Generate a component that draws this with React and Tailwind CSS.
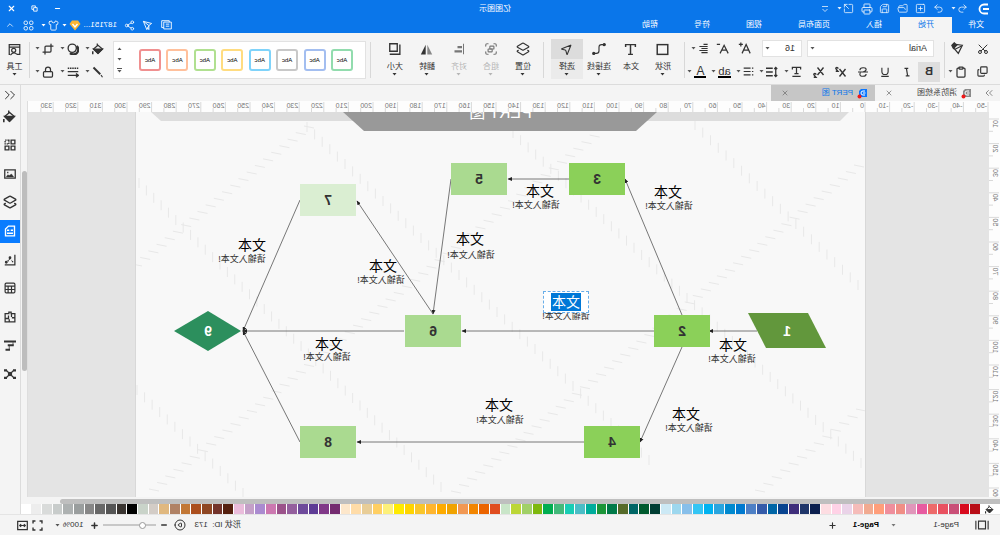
import React from "react";
import {
  ChevronsLeft,
  ChevronsRight,
  ChevronUp,
  CirclePlay,
  Clipboard,
  Copy,
  Crop,
  FolderOpen,
  Group,
  Layers2,
  Lock,
  MousePointer2,
  Plus,
  Minus,
  Printer,
  Redo2,
  Save,
  Scissors,
  Share2,
  Shirt,
  SquareArrowOutUpRight,
  SquarePlus,
  Undo2,
  X,
} from "lucide-react";

const colors = [
  "#b80d16", "#d80a1d", "#c94f77", "#e95160", "#ed6a6a", "#e75ba0", "#e096ba", "#f08e85", "#ef8e9c", "#ff9e7a",
  "#f1aa90", "#f5bcb9", "#ead3e8", "#ffd2e6", "#fddde2", "#0b1f4e", "#1f3569", "#3e2d7a", "#084490", "#0066a6",
  "#355ba9", "#4d7fc5", "#0079cf", "#0089cf", "#29a5df", "#00b2f0", "#34c5f4", "#87bfea", "#9dd7ee", "#cce9f5",
  "#003d33", "#005a2e", "#006666", "#566b2a", "#007a49", "#1c9639", "#00ad9c", "#4bbdc6", "#18cdb4", "#43b97a",
  "#00ad50", "#7eb80d", "#a1d067", "#bcd636", "#c9e5c8", "#e04c1f", "#eb6400", "#f28500", "#f19853", "#f0a300",
  "#feab00", "#ffb52e", "#f9c62b", "#ffd400", "#ffea00", "#fdf07a", "#ffcf63", "#e8cd97", "#ffdca8", "#fde7cb",
  "#742b70", "#803888", "#5e3c95", "#6e4a9b", "#945f9d", "#9b528a", "#cc78b0", "#aa8bd0", "#c4a0c8", "#eabcdb",
  "#55200f", "#73332a", "#8e4623", "#ab4e1d", "#c27735", "#b08265", "#e0b87f", "#d3ccc6", "#c9d3c9", "#000000",
  "#3a3531", "#555555", "#686868", "#878787", "#9a9e9e", "#adb1b1", "#c8cccb", "#d9dbda", "#ededed", "#ffffff",
];

const chips = [
  "border-[#92dcae]",
  "border-[#a3bef0]",
  "border-[#c8c8c8]",
  "border-[#7fd3fa]",
  "border-[#ffdc80]",
  "border-[#b0e090]",
  "border-[#ffc09c]",
  "border-[#f09090]",
];

// node boxes on the page, x/y is the top left corner
const nodes = [
  { n: 2, x: 155, y: 203, cls: "bg-[#8bd059]" },
  { n: 3, x: 240, y: 51, cls: "bg-[#8bd059]" },
  { n: 4, x: 225, y: 314, cls: "bg-[#8bd059]" },
  { n: 5, x: 358, y: 51, cls: "bg-[#aada90]" },
  { n: 6, x: 404, y: 203, cls: "bg-[#aada90]" },
  { n: 7, x: 509, y: 72, cls: "bg-[#daeed2]" },
  { n: 8, x: 509, y: 314, cls: "bg-[#aada90]" },
];

// [x1, y1, x2, y2], the arrow head is at the second point
const links = [
  [108, 219, 156, 219],
  [183, 203, 240, 67],
  [296, 67, 357, 67],
  [414, 67, 432, 202],
  [432, 202, 508, 89],
  [211, 219, 403, 219],
  [183, 235, 225, 330],
  [280, 330, 508, 330],
  [461, 219, 622, 219],
  [565, 88, 622, 219],
  [565, 330, 622, 219],
];

// centres of the heading and of the hint under it
const labels = [
  { head: [197, 80], hint: [196, 94] },
  { head: [325, 79], hint: [329, 93] },
  { head: [395, 127], hint: [394, 143] },
  { head: [482, 154], hint: [484, 168] },
  { head: [613, 133], hint: [623, 147] },
  { head: [536, 232], hint: [538, 245] },
  { head: [132, 233], hint: [133, 247] },
  { head: [366, 293], hint: [365, 308] },
  { head: [179, 302], hint: [176, 316] },
];

const between = (x1, y1, x2, y2, step) => {
  const count = Math.floor(Math.hypot(x2 - x1, y2 - y1) / step);
  return Array.from({ length: count + 1 }, (_, i) => [
    x1 + ((x2 - x1) * i) / count,
    y1 + ((y2 - y1) * i) / count,
  ]);
};

const upright = [
  [170, 13, 7, 173],
  [352, 21, 4, 351],
  [558, 15, 216, 348],
  [726, 71, 424, 375],
  [728, 278, 622, 381],
].flatMap((r) => between(...r, 10.4));

const slanted = [
  [6, 54, 409, 380],
  [254, 11, 711, 378],
  [556, 15, 728, 153],
  [4, 298, 105, 379],
].flatMap((r) => between(...r, 10.3));

const Icon = ({ size = 12, box = 16, w = 1.3, children }) => (
  <svg width={size} height={size} viewBox={`0 0 ${box} ${box}`} fill="none" stroke="currentColor" strokeWidth={w}>
    {children}
  </svg>
);

const Bucket = ({ size = 12 }) => (
  <Icon size={size} w={1.6}>
    <path d="M8 3l6 5-6 6-6-6zM9 4V0.500" />
    <path d="M2 8h12l-6 6z" fill="currentColor" />
    <path d="M15 11v4" strokeWidth="2" />
  </Icon>
);

const Caret = ({ className = "text-[#555]" }) => (
  <svg width="5" height="3" viewBox="0 0 5 3" className={className} fill="currentColor">
    <path d="M0.5 0h4L2.5 2.6z" />
  </svg>
);

const Divider = () => <div className="mt-[9px] h-9 w-px bg-[#d8d8d8]" />;

const Cell = ({ label, wide, className = "", children }) => (
  <button
    aria-label={label}
    className={`flex h-5 items-center justify-center gap-[2px] ${wide ? "w-6" : "w-[22px]"} ${className}`}
  >
    {children}
    {wide && <Caret />}
  </button>
);

const Tool = ({ label, caret = true, active, dim, children }) => (
  <button className={`flex h-10 w-8 flex-col items-center ${active ? "bg-[#ebebeb]" : ""} ${dim ? "text-[#b5b5b5]" : "text-[#333]"}`}>
    <span className={`flex h-5 w-full shrink-0 items-center justify-center ${active ? "bg-[#dcdcdc]" : ""}`}>{children}</span>
    <span className="mt-[3px] whitespace-nowrap text-[8px] leading-[10px]">{label}</span>
    {caret && (
      <span className="mt-px flex">
        <Caret className="text-current" />
      </span>
    )}
  </button>
);

const TitleBar = () => (
  <div className="flex h-[17px] items-center text-white">
    <div className="flex flex-1 items-center pl-[10px]">
      <svg width="12" height="12" viewBox="0 0 12 12" fill="none" stroke="white" strokeWidth="1.8">
        <path d="M2 1.5h4a4.5 4.5 0 0 1 0 9H2M1 6h6" />
      </svg>
      <div className="ml-[6px] flex opacity-90">
        <button aria-label="撤销" className="flex w-6 items-center justify-center gap-px">
          <Undo2 size={11} strokeWidth={1.8} />
          <Caret className="text-white" />
        </button>
        <button aria-label="重做" className="flex w-[18px] justify-center"><Redo2 size={11} strokeWidth={1.8} /></button>
        <button aria-label="新建" className="flex w-[18px] justify-center"><SquarePlus size={11} strokeWidth={1.8} /></button>
        <button aria-label="打开" className="flex w-[18px] justify-center"><FolderOpen size={11} strokeWidth={1.8} /></button>
        <button aria-label="保存" className="flex w-[18px] justify-center"><Save size={11} strokeWidth={1.8} /></button>
        <button aria-label="打印" className="flex w-[18px] justify-center"><Printer size={12} strokeWidth={1.8} /></button>
        <button aria-label="导出" className="flex w-6 items-center justify-center gap-px">
          <SquareArrowOutUpRight size={11} strokeWidth={1.8} />
          <Caret className="text-white" />
        </button>
        <button aria-label="更多" className="flex w-[18px] items-center justify-center">
          <Icon size={8} w={1.6}><path d="M2 3h12M3 8l5 5 5-5" /></Icon>
        </button>
      </div>
    </div>
    <h1 className="text-[8px]">亿图图示</h1>
    <div className="flex flex-1 justify-end">
      <button aria-label="最小化" className="flex w-[23px] items-center justify-center"><Minus size={7} strokeWidth={4} /></button>
      <button aria-label="还原" className="flex w-[23px] items-center justify-center">
        <Icon size={7} w={2}><path d="M2 6h8v8H2zM6 6V2h8v8h-4" /></Icon>
      </button>
      <button aria-label="关闭" className="flex w-[23px] items-center justify-center"><X size={9} strokeWidth={3} /></button>
    </div>
  </div>
);

const MenuBar = () => (
  <div className="flex h-4 items-stretch text-[8px] text-white">
    <button className="w-12">文件</button>
    <button className="bg-[#f4f4f4] px-[18px] text-[#0a76ea]">开始</button>
    {["插入", "页面布局", "视图", "符号", "帮助"].map((m) => (
      <button key={m} className="px-[18px]">{m}</button>
    ))}
    <div className="ml-auto flex items-center">
      <button aria-label="消息" className="flex w-5 justify-center">
        <Icon size={11}><path d="M1 3h11v10H1zM4 3V1h11v10h-3M4 6h5M4 9h5" /></Icon>
      </button>
      <button aria-label="发送" className="flex w-[18px] justify-center">
        <Icon size={11}><path d="M14 2L2 5l4 3zM14 2L9 14 6 8M6 8v6l2-3" /></Icon>
      </button>
      <button aria-label="分享" className="flex w-[18px] justify-center"><Share2 size={11} strokeWidth={1.8} className="-scale-x-100" /></button>
      <button className="flex w-[59px] items-center justify-between pl-1">
        187151...
        <svg width="12" height="11" viewBox="0 0 12 11">
          <path d="M3 0.5h6L11.5 4 6 10.5 0.5 4z" fill="#fbb534" />
          <path d="M3.5 4L6 7l2.5-3" stroke="white" strokeWidth="1.4" fill="none" />
        </svg>
        <Caret className="text-white" />
      </button>
      <button aria-label="主题" className="flex w-6 items-center justify-center gap-[2px]">
        <Shirt size={11} strokeWidth={1.8} />
        <Caret className="text-white" />
      </button>
      <button aria-label="应用" className="flex w-[18px] justify-center">
        <Icon size={11}>
          <rect x="1.5" y="1.5" width="5" height="5" rx="2" />
          <rect x="9.5" y="1.5" width="5" height="5" rx="2" />
          <rect x="1.5" y="9.5" width="5" height="5" rx="2" />
          <rect x="9.5" y="9.5" width="5" height="5" rx="2" />
        </Icon>
      </button>
      <button aria-label="收起" className="flex w-5 justify-center"><ChevronUp size={10} strokeWidth={1.8} /></button>
    </div>
  </div>
);

const FontGroup = () => (
  <div className="flex flex-col pl-1 pt-1 text-[#333]">
    <div className="flex h-[23px] items-center pl-[6px]">
      <div className="relative">
        <select aria-label="字体" className="block h-[17px] w-[127px] appearance-none border border-[#e2e2e2] bg-white px-[6px] text-[9px] leading-[15px]">
          <option>Arial</option>
        </select>
        <Caret className="absolute right-[3px] top-[7px] text-[#555]" />
      </div>
      <div className="relative ml-[5px]">
        <select aria-label="字号" className="block h-[17px] w-10 appearance-none border border-[#e2e2e2] bg-white px-[6px] text-[9px] leading-[15px]">
          <option>16</option>
        </select>
        <Caret className="absolute right-[3px] top-[7px] text-[#555]" />
      </div>
      <div className="ml-[6px] flex">
        <Cell label="增大字号"><Icon size={13} w={1.5}><path d="M1 14L6 3l5 11M3 10h6M10 3h5M12.5 0.5v5" /></Icon></Cell>
        <Cell label="减小字号"><Icon size={13} w={1.5}><path d="M1 14L6 4l5 10M3 10h6M11 3h4" /></Icon></Cell>
        <Cell label="对齐" wide><Icon size={11} w={1.6}><path d="M2 2h6M2 5h12M2 8h9M2 11h12M2 14h9" /></Icon></Cell>
      </div>
    </div>
    <div className="flex h-[23px] items-center">
      <Cell label="粗体" className="bg-[#dedede] text-[11px] font-bold">B</Cell>
      <Cell label="斜体"><Icon size={10} w={2}><path d="M6 2h6M4 14h6M9 2L7 14" /></Icon></Cell>
      <Cell label="下划线"><Icon size={10} w={1.8}><path d="M3 1v6a5 5 0 0 0 10 0V1M2 15h12" /></Icon></Cell>
      <Cell label="删除线"><Icon size={10} w={1.8}><path d="M13 5c0-5-10-5-10-1 0 2 2 3 5 4M3 11c0 5 10 5 10 1 0-1 0-2-1-3M0 8h16" /></Icon></Cell>
      <Cell label="上标"><Icon size={12} w={1.8}><path d="M2 4l8 10M10 4L2 14M12 3.5c0-2 3-2 3 0L12 7h3" /></Icon></Cell>
      <Cell label="下标"><Icon size={12} w={1.8}><path d="M2 2l8 10M10 2L2 12M12 11.500c0-2 3-2 3 0L12 15h3" /></Icon></Cell>
      <div className="ml-[3px] flex">
        <Cell label="文字方向" wide><Icon size={11} w={1.8}><path d="M2 5V2h12v3M8 2v9M5 11h6M2 15h12" /></Icon></Cell>
        <Cell label="行距" wide><Icon size={12} w={1.7}><path d="M3 2v12M1 4l2-2 2 2M1 12l2 2 2-2M7 3h9M7 8h9M7 13h9" /></Icon></Cell>
        <Cell label="列表" wide><Icon size={11} w={1.8}><path d="M1 3h2M1 8h2M1 13h2M5 3h10M5 8h10M5 13h10" /></Icon></Cell>
        <Cell label="突出显示" wide><span className="border-b-2 border-black text-[11px] leading-[10px]">ab</span></Cell>
        <Cell label="字体颜色" wide><span className="w-3 border-b-2 border-black text-[12px] leading-[10px]">A</span></Cell>
      </div>
    </div>
  </div>
);

const Ribbon = () => (
  <div className="flex h-[52px] items-start border-b border-[#dcdcdc] bg-[#f4f4f4] text-[#333]">
    <div className="flex flex-col pl-1 pt-1">
      <div className="flex h-[23px] items-center">
        <button aria-label="剪切" className="flex w-[26px] justify-center"><Scissors size={12} className="-rotate-90" /></button>
        <button aria-label="格式刷" className="flex w-[25px] justify-center">
          <Icon size={13} w={1.5}>
            <path d="M2 4l8-1 3 4-6 7z" />
            <path d="M9 4l3-3 3 3-2 4z" fill="currentColor" />
            <path d="M3 5l8 4" />
          </Icon>
        </button>
      </div>
      <div className="flex h-[23px] items-center">
        <button aria-label="复制" className="flex w-[26px] justify-center"><Copy size={11} strokeWidth={2.5} className="-scale-100" /></button>
        <button aria-label="粘贴" className="flex w-[25px] items-center justify-center gap-[2px]"><Clipboard size={12} strokeWidth={2.5} /><Caret /></button>
      </div>
    </div>
    <Divider />
    <FontGroup />
    <Divider />
    <div className="flex pl-[5px] pr-[7px] pt-[6px]">
      <Tool label="形状"><Icon size={13} w={1.8}><rect x="1.500" y="2" width="13" height="12" /></Icon></Tool>
      <Tool label="文本" caret={false}><Icon size={13} w={1.8}><path d="M2 5V2h12v3M8 2v12M5 14h6" /></Icon></Tool>
      <Tool label="连接线">
        <Icon size={14}>
          <path d="M3 3h2q3 0 3 3v4q0 3 3 3h2" />
          <circle cx="2" cy="3" r="1.200" fill="currentColor" />
          <circle cx="14" cy="13" r="1.200" fill="currentColor" />
        </Icon>
      </Tool>
      <Tool label="选择" active><MousePointer2 size={13} /></Tool>
    </div>
    <Divider />
    <div className="flex pl-1 pr-2 pt-[6px]">
      <Tool label="位置"><Layers2 size={14} /></Tool>
      <Tool label="组合" dim><Group size={14} className="text-[#777]" /></Tool>
      <Tool label="对齐" dim>
        <Icon size={12} w={1.4}><path d="M2 1v14" stroke="#777" /><path d="M4 5.500h6M4 11h10" stroke="#777" strokeWidth="3" /></Icon>
      </Tool>
      <Tool label="翻转">
        <Icon size={13} w={0}><path d="M7 2v12H1z" fill="#888" /><path d="M9 2v12h6z" fill="#333" /></Icon>
      </Tool>
      <Tool label="大小"><Icon size={12} w={1.8}><path d="M5 1h10v10H5zM1.500 2v13H15" /></Icon></Tool>
    </div>
    <Divider />
    <div className="ml-1 mt-2 flex h-[38px] flex-1 border border-[#e2e2e2] bg-white">
      <div className="flex flex-1 items-center justify-between pl-3">
        {chips.map((c) => (
          <button key={c} className={`size-[22px] rounded-[3px] border-2 text-[6px] leading-none text-black ${c}`}>Abc</button>
        ))}
      </div>
      <div className="ml-[13px] flex w-3 flex-col items-center justify-between py-[5px]">
        <button aria-label="上一行"><Caret className="rotate-180 text-[#555]" /></button>
        <button aria-label="下一行"><Caret /></button>
        <button aria-label="全部样式" className="border-t border-[#555] pt-px"><Caret /></button>
      </div>
    </div>
    <div className="flex flex-col pl-[6px] pr-[3px] pt-1">
      <div className="flex h-[23px] items-center gap-px">
        <Cell label="填充" wide><Bucket /></Cell>
        <Cell label="阴影" wide>
          <Icon size={12} w={1.8}><circle cx="9" cy="7" r="5.500" /><path d="M3 4a6.500 6.500 0 0 0 9 9.500" strokeWidth="3" /></Icon>
        </Cell>
        <Cell label="裁剪" wide><Crop size={12} strokeWidth={2.5} /></Cell>
      </div>
      <div className="flex h-[23px] items-center gap-px">
        <Cell label="线条" wide><Icon size={12} w={2.6}><path d="M14 2L5 11" /><path d="M4 12l-2 3" strokeWidth="1.500" /></Icon></Cell>
        <Cell label="线型" wide><Icon size={12} w={1.8}><path d="M1 3h14" strokeDasharray="2 1" /><path d="M1 7.500h14M1 12.500h14M4 10l-3 2.500L4 15" /></Icon></Cell>
        <Cell label="锁定" wide><Lock size={12} strokeWidth={2.5} /></Cell>
      </div>
    </div>
    <Divider />
    <div className="flex w-[29px] justify-center pt-[6px]">
      <Tool label="工具">
        <Icon size={13} w={1.5}>
          <path d="M5 14H1.500V2h13v12h-1M1.500 5h13" />
          <circle cx="9" cy="9" r="2.500" />
          <path d="M5 14q4-4 8 1" />
        </Icon>
      </Tool>
    </div>
  </div>
);

const Tab = ({ title, active }) => (
  <div className={`flex w-[104px] items-center pl-[7px] pr-[10px] ${active ? "bg-[#c6c6c6] text-[#0a76ea]" : "text-[#444]"}`}>
    <svg width="11" height="11" viewBox="0 0 11 11">
      <path d="M1 1h6l2 2v6H1z" fill={active ? "#0a76ff" : "#8a8a8a"} />
      <path d="M3 3h2a2 2 0 0 1 0 4H3M2.500 5H5" stroke="white" fill="none" />
      <circle cx="8.500" cy="8.500" r="2" fill="#f01818" />
    </svg>
    <button className="ml-1 whitespace-nowrap text-[8px]">{title}</button>
    <button aria-label={`关闭 ${title}`} className="ml-auto text-[#666]"><X size={8} /></button>
  </div>
);

const STEP = 24.6;

const TopRuler = () => (
  <svg className="h-[11px] w-full bg-[#fdfdfd]" fontSize="7" fill="#777" stroke="none">
    {Array.from({ length: 78 }, (_, i) => {
      const x = 12 + (i * STEP) / 2;
      return <path key={i} d={i % 2 ? `M${x} 7v4` : `M${x} 1v10`} stroke="#d9d9d9" />;
    })}
    {Array.from({ length: 39 }, (_, i) => (
      <text key={i} x={13 + i * STEP} y="7">{(i - 5) * 10}</text>
    ))}
  </svg>
);

const SideRuler = () => (
  <svg className="h-full w-[11px] shrink-0 bg-[#fdfdfd]" fontSize="7" fill="#777">
    {Array.from({ length: 32 }, (_, i) => {
      const y = 7 + (i * STEP) / 2;
      return <path key={i} d={i % 2 ? `M7 ${y}h4` : `M1 ${y}h10`} stroke="#d9d9d9" />;
    })}
    {Array.from({ length: 16 }, (_, i) => (
      <text key={i} textAnchor="end" transform={`translate(7 ${8 + i * STEP}) rotate(-90)`}>{(i + 1) * 10}</text>
    ))}
  </svg>
);

const at = ([x, y]) => ({ left: x, top: y });

const Page = () => (
  <div className="relative ml-[123px] h-full w-[731px] shrink-0 overflow-hidden border-x border-[#d8d8d8] bg-[#f8f8f8]">
    <svg className="absolute inset-0 size-full">
      <defs>
        <marker id="head" markerWidth="5" markerHeight="5" refX="4" refY="2" orient="auto" markerUnits="userSpaceOnUse">
          <path d="M0 0l4.500 2L0 4z" fill="#222" />
        </marker>
      </defs>
      <g stroke="#e8e8e8">
        {upright.map(([x, y], i) => <path key={i} d={`M${x} ${y - 5}v10`} />)}
        {slanted.map(([x, y], i) => <path key={i} d={`M${x - 5} ${y + 1}l10 -2`} />)}
      </g>
      <path d="M16 0H714L704 9H25z" fill="#dddddd" />
      <path d="M208 0H522L501 19H229z" fill="#999999" />
      <g stroke="#555" strokeWidth="0.8">
        {links.map(([x1, y1, x2, y2], i) => (
          <line key={i} x1={x1} y1={y1} x2={x2} y2={y2} markerEnd="url(#head)" />
        ))}
      </g>
      <path d="M39 236L57 201h60L99 236z" fill="#62973c" />
      <path d="M624 219l33-20 34 20-34 20z" fill="#2c8f5d" />
    </svg>
    <h2 className="absolute -top-[7px] left-1/2 -translate-x-1/2 whitespace-nowrap text-[16px] leading-4 text-white">PERT 图</h2>
    <span className="absolute -translate-1/2 text-[14px] font-bold text-white" style={at([78, 219])}>1</span>
    <span className="absolute -translate-1/2 text-[14px] font-bold text-white" style={at([657, 219])}>9</span>
    {nodes.map(({ n, x, y, cls }) => (
      <div key={n} className={`absolute flex h-8 w-14 items-center justify-center text-[14px] font-bold text-[#333] ${cls}`} style={at([x, y])}>
        {n}
      </div>
    ))}
    {labels.map(({ head, hint }) => (
      <React.Fragment key={head.join()}>
        <p className="absolute -translate-1/2 whitespace-nowrap text-[14px] leading-4 text-black" style={at(head)}>文本</p>
        <p className="absolute -translate-1/2 whitespace-nowrap text-[9px] leading-3 text-[#333]" style={at(hint)}>请输入文本!</p>
      </React.Fragment>
    ))}
    <p className="absolute -translate-1/2 whitespace-nowrap text-[9px] leading-3 text-[#333]" style={at([299, 204])}>请输入文本!</p>
    <div className="absolute flex h-[22px] w-[46px] items-center justify-center border border-dashed border-[#6aaee8] bg-white" style={at([276, 179])}>
      <input aria-label="文本" defaultValue="文本" className="h-[18px] w-[30px] bg-[#0078d7] text-center text-[14px] text-white" />
    </div>
  </div>
);

const sideItems = [
  ["填充", <Bucket size={13} />],
  ["符号库", <Icon w={1.8}><path d="M1.500 1.500h5v5h-5zM9.500 9.500h5v5h-5zM1.500 9.500h5v5h-5z" /><path d="M9.500 1.500h5v5h-5z" strokeDasharray="2 1" /></Icon>],
  ["图片", <Icon w={1.7}><path d="M1 2.500h14v11H1z" /><path d="M3 12l3-4 3 2 2-1 2 3z" fill="currentColor" strokeWidth="0.500" /><path d="M11 5v2" /></Icon>],
  ["图层", <Layers2 size={14} strokeWidth={2.3} />],
  ["页面", <Icon w={1.8}><path d="M2 1.500h8l4 4v9H2zM4 7h3M9 7h3M4 11h8" /></Icon>],
  ["图表", <Icon w={1.7}><path d="M1.500 1v13.500H15" /><path d="M4 11l2-3M8 6l4 5" strokeDasharray="2 1" /><circle cx="8" cy="5" r="1" fill="currentColor" /><circle cx="13" cy="11" r="1" fill="currentColor" /></Icon>],
  ["表格", <Icon w={1.6}><rect x="1.500" y="1.500" width="13" height="13" rx="1.500" /><path d="M1.500 5.500h13M1.500 10h13M6 5.500v9M10.500 5.500v9" /></Icon>],
  ["平面图", <Icon w={1.7}><path d="M1.500 3.500h5v-2h3v2h5v11h-13zM6 4v4M1.500 9h4M10 6v4h4M9 11v3" /></Icon>],
  ["甘特图", <Icon w={2.4}><path d="M0 2h16M3 7h8M8 13h6" /><path d="M4 3v4M9 7v6" strokeWidth="1" /></Icon>],
  ["思维导图", <Icon w={1.5}><path d="M3 3l4 4M13 3L9 7M3 13l4-4M13 13L9 9" /><path d="M0 3h4M12 3h4M0 13h4M12 13h4" strokeWidth="3" /><rect x="6" y="6" width="4" height="4" fill="currentColor" /></Icon>],
];

const Sidebar = () => (
  <aside className="w-[21px] shrink-0 border-l border-[#dcdcdc] bg-[#f4f4f4] text-[#333]">
    <button aria-label="收起面板" className="flex h-5 w-full items-center justify-center"><ChevronsLeft size={18} strokeWidth={1.3} /></button>
    <nav className="flex h-[281px] flex-col justify-between">
      {sideItems.map(([name, icon]) => (
        <button
          key={name}
          aria-label={name}
          className={`flex h-[23px] items-center justify-center ${name === "页面" ? "bg-[#0a7cff] text-white" : ""}`}
        >
          {icon}
        </button>
      ))}
    </nav>
  </aside>
);

const StatusBar = () => (
  <footer className="flex h-[21px] shrink-0 items-center border-t border-[#e4e4e4] bg-[#f4f4f4] text-[8px] text-[#333]">
    <button aria-label="页面视图" className="flex w-9 justify-center">
      <Icon size={14}><path d="M1 3v10M15 3v10M4 3.500h8v9H4z" /></Icon>
    </button>
    <div className="relative ml-[5px]">
      <select aria-label="页面" className="block w-[72px] appearance-none bg-transparent text-[8px]">
        <option>Page-1</option>
      </select>
      <Caret className="absolute right-1 top-[5px] text-[#777]" />
    </div>
    <button className="ml-2 font-bold text-black">Page-1</button>
    <button aria-label="添加页面" className="ml-4"><Plus size={9} strokeWidth={3} /></button>
    <div className="ml-auto flex items-center pr-[17px]">
      <span>形状 ID:&nbsp; 173</span>
      <button aria-label="播放" className="ml-2"><CirclePlay size={12} /></button>
      <button aria-label="缩小" className="ml-[6px]"><Minus size={8} strokeWidth={4} /></button>
      <input
        type="range"
        aria-label="缩放"
        defaultValue="23"
        className="mx-1 h-[2px] w-[53px] appearance-none bg-[#c8c8c8] [&::-webkit-slider-thumb]:size-[7px] [&::-webkit-slider-thumb]:appearance-none [&::-webkit-slider-thumb]:rounded-full [&::-webkit-slider-thumb]:border [&::-webkit-slider-thumb]:border-[#999] [&::-webkit-slider-thumb]:bg-white"
      />
      <button aria-label="放大"><Plus size={9} strokeWidth={4} /></button>
      <button className="ml-[7px] flex items-center gap-[3px]">100%<Caret /></button>
      <button aria-label="全屏" className="ml-3">
        <Icon size={11} w={2}><path d="M1.500 5V1.500H5M11 1.500h3.500V5M14.500 11v3.500H11M5 14.500H1.500V11" /></Icon>
      </button>
      <button aria-label="适合宽度" className="ml-1">
        <Icon size={11} w={1.8}><path d="M1 2h14v12H1zM4 8h8M6 6L4 8l2 2M10 6l2 2-2 2" /></Icon>
      </button>
    </div>
  </footer>
);

// the whole window is shown flipped from left to right
const App = () => {
  return (
    <div className="flex h-screen w-full -scale-x-100 flex-col overflow-hidden bg-[#f4f4f4] font-['Liberation_Sans','Noto_Sans_CJK_SC',sans-serif]">
      <header className="shrink-0 bg-[#0a76ea]">
        <TitleBar />
        <MenuBar />
        <Ribbon />
      </header>

      <div className="flex min-h-0 flex-1">
        <main className="flex min-w-0 flex-1 flex-col">
          <div className="flex h-4 shrink-0">
            <button aria-label="更多标签" className="flex w-[21px] items-center justify-center text-[#666]"><ChevronsRight size={12} strokeWidth={1.500} /></button>
            <Tab title="消防系统图" />
            <Tab title="PERT 图" active />
          </div>
          <div className="flex min-h-0 flex-1">
            <div className="flex min-w-0 flex-1 flex-col">
              <div className="h-[11px] shrink-0">
                <TopRuler />
              </div>
              <div className="flex min-h-0 flex-1 overflow-hidden bg-[#e4e4e4]">
                <SideRuler />
                <Page />
              </div>
            </div>
            <div className="w-[7px] border-l border-[#dedede] bg-[#f4f4f4] pt-[70px]">
              <div className="h-[200px] w-[5px] rounded-full bg-[#bdbdbd]" />
            </div>
          </div>
          <div className="h-[7px] shrink-0 pt-[2px]">
            <div className="h-[5px] w-[96%] rounded-r-full bg-[#bfbfbf]" />
          </div>
          <div className="flex h-[10px] shrink-0 bg-white">
            <button aria-label="填充颜色" className="flex w-5 items-center justify-center text-[#333]"><Bucket size={9} /></button>
            <div className="flex flex-1 gap-px">
              {colors.map((c) => (
                <button key={c} aria-label={c} className="flex-1" style={{ backgroundColor: c }} />
              ))}
            </div>
          </div>
        </main>
        <Sidebar />
      </div>

      <StatusBar />
    </div>
  );
};

export default App;
